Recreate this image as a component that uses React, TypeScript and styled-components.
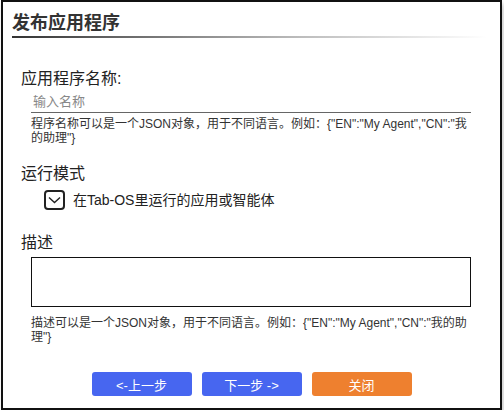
import React from 'react'
import styled, { createGlobalStyle } from 'styled-components'

const GlobalStyle = createGlobalStyle`
  html, body {
    margin: 0;
    padding: 0;
    background: #fff;
  }
  body {
    font-family: "Liberation Sans", "Noto Sans CJK SC", sans-serif;
    color: #222;
  }
`

const Dialog = styled.div`
  box-sizing: border-box;
  width: 501px;
  height: 410px;
  margin-left: 1px;
  border: 2px solid #111;
  background: #fff;
  box-shadow: 2px 4px 5px rgba(0, 0, 0, 0.22);
  display: flex;
  flex-direction: column;
`
const Header = styled.div`
  padding: 10px 14px 0 9px;
`
const Title = styled.h2`
  margin: 0;
  padding-bottom: 2px;
  font-size: 18px;
  line-height: 22px;
  font-weight: 700;
  color: #333;
  border-bottom: 2px solid transparent;
  border-image: linear-gradient(to right, #333, #bbb 60%, #fff) 1;
`
const Body = styled.div`
  padding: 0 0 0 18px;
  display: flex;
  flex-direction: column;
`
const Section = styled.section<{ $top: number }>`
  margin-top: ${p => p.$top}px;
`
const Label = styled.div`
  font-size: 16px;
  line-height: 20px;
  color: #222;
`
const Indent = styled.div`
  margin-left: 10px;
  width: 440px;
`
const NameInput = styled.input`
  box-sizing: border-box;
  display: block;
  width: 440px;
  height: 22px;
  margin-top: 2px;
  padding: 0 0 0 2px;
  border: none;
  border-bottom: 1px solid #666;
  outline: none;
  font: inherit;
  font-size: 13px;
  color: #222;
  &::placeholder {
    color: #888;
  }
`
const Help = styled.p<{ $top: number }>`
  margin: ${p => p.$top}px 0 0;
  font-size: 12px;
  line-height: 14px;
  color: #333;
`
const CheckRow = styled.label`
  display: flex;
  align-items: center;
  gap: 8px;
  margin: 6px 0 0 23px;
  font-size: 14px;
  line-height: 20px;
  color: #222;
`
const DescArea = styled.textarea`
  box-sizing: border-box;
  display: block;
  width: 440px;
  height: 50px;
  margin-top: 4px;
  border: 1px solid #111;
  resize: none;
  outline: none;
  font: inherit;
`
const Footer = styled.div`
  margin-top: auto;
  padding-bottom: 12px;
  display: flex;
  justify-content: center;
  gap: 10px;
`
const Button = styled.button<{ $tone: 'blue' | 'orange' }>`
  width: 100px;
  height: 24px;
  border: none;
  border-radius: 3px;
  background: ${p => (p.$tone === 'blue' ? '#4766f0' : '#ee802f')};
  color: #fff;
  font-family: "Liberation Sans", "Noto Sans CJK SC", sans-serif;
  font-size: 13px;
  padding: 0;
  cursor: pointer;
`

const CheckIcon = () => (
  <svg width="21" height="20" viewBox="0 0 21 20">
    <rect x="1" y="1" width="19" height="18" rx="3" fill="none" stroke="#222" strokeWidth="2" />
    <polyline points="5,7.5 10.5,12.5 16,7.5" fill="none" stroke="#222" strokeWidth="1.4" />
  </svg>
)

const nameHelp = '程序名称可以是一个JSON对象，用于不同语言。例如：{"EN":"My Agent","CN":"我的助理"}'
const descHelp = '描述可以是一个JSON对象，用于不同语言。例如：{"EN":"My Agent","CN":"我的助理"}'

const App = (): JSX.Element => (
  <>
    <GlobalStyle />
    <Dialog>
      <Header>
        <Title>发布应用程序</Title>
      </Header>
      <Body>
        <Section $top={31}>
          <Label>应用程序名称:</Label>
          <Indent>
            <NameInput placeholder="输入名称" />
            <Help $top={4}>{nameHelp}</Help>
          </Indent>
        </Section>
        <Section $top={19}>
          <Label>运行模式</Label>
          <CheckRow>
            <CheckIcon />
            在Tab-OS里运行的应用或智能体
          </CheckRow>
        </Section>
        <Section $top={23}>
          <Label>描述</Label>
          <Indent>
            <DescArea />
            <Help $top={9}>{descHelp}</Help>
          </Indent>
        </Section>
      </Body>
      <Footer>
        <Button $tone="blue">&lt;-上一步</Button>
        <Button $tone="blue">下一步 -&gt;</Button>
        <Button $tone="orange">关闭</Button>
      </Footer>
    </Dialog>
  </>
)

export default App
